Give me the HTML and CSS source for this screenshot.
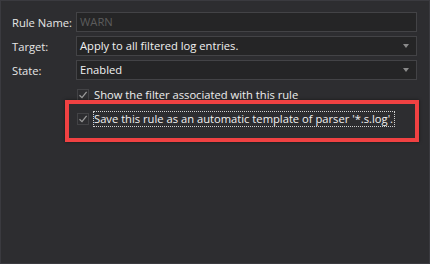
FILE: index.html
```html
<!DOCTYPE html>
<html lang="en">
<head>
    <meta charset="UTF-8">
    <title>Rule settings</title>
    <link rel="stylesheet" href="styles.css">
</head>
<body>

<div class="panel">
    <div class="form">
        <label class="label">Rule Name:</label>
        <div class="field"><span class="placeholder">WARN</span></div>

        <label class="label">Target:</label>
        <div class="field select"><span>Apply to all filtered log entries.</span><i class="arrow"></i></div>

        <label class="label">State:</label>
        <div class="field select"><span>Enabled</span><i class="arrow"></i></div>
    </div>

    <div class="options">
        <div class="option">
            <span class="check"><svg width="10" height="10" viewBox="0 0 10 10"><path d="M1.5 5.2 L4 7.6 L8.6 1.8" fill="none" stroke="#9a9a9a" stroke-width="1.3"/></svg></span>
            <span class="option-text">Show the filter associated with this rule</span>
        </div>
        <div class="option">
            <span class="check"><svg width="10" height="10" viewBox="0 0 10 10"><path d="M1.5 5.2 L4 7.6 L8.6 1.8" fill="none" stroke="#9a9a9a" stroke-width="1.3"/></svg></span>
            <span class="option-text focused">Save this rule as an automatic template of parser '*.s.log'.</span>
        </div>
        <div class="highlight"></div>
    </div>
</div>

</body>
</html>
```

FILE: styles.css
```css
body {
    margin: 0;
    background-color: #2d2d30;
    font-family: "Open Sans", "Noto Sans", sans-serif;
    font-size: 11.2px;
    color: #f1f1f1;
    white-space: nowrap;
}
.panel {
    width: 430px;
    height: 264px;
    box-sizing: border-box;
    border: 1px solid #3a3a3f;
    padding: 11px 12px 0 11px;
}
.form {
    display: grid;
    grid-template-columns: 64px 341px;
    row-gap: 4px;
    align-items: center;
}
.label {
    color: #e6e6e6;
}
.field {
    height: 20px;
    box-sizing: border-box;
    border: 1px solid #434346;
    background-color: #252526;
    padding: 0 3px;
    display: flex;
    align-items: center;
    justify-content: space-between;
    line-height: 18px;
}
.placeholder {
    color: #5c5c5c;
}
.arrow {
    width: 0;
    height: 0;
    border-left: 3px solid transparent;
    border-right: 3px solid transparent;
    border-top: 4px solid #8a8a8a;
    margin-right: 4px;
}
.options {
    position: relative;
    margin-top: 7px;
    padding-left: 65px;
    display: flex;
    flex-direction: column;
    gap: 8px;
}
.option {
    display: flex;
    align-items: center;
    gap: 4px;
    height: 16px;
}
.check {
    width: 12px;
    height: 12px;
    box-sizing: border-box;
    border: 1px solid #434346;
    display: flex;
    align-items: center;
    justify-content: center;
}
.option-text {
    line-height: 14px;
    padding: 0 1px 0 0;
    border: 1px solid transparent;
}
.option-text.focused {
    border: 1px dotted #d0d0d0;
}
.highlight {
    position: absolute;
    left: 53px;
    top: 13px;
    width: 354px;
    height: 42px;
    box-sizing: border-box;
    border: 4px solid #f04142;
    box-shadow: 0 0 3px rgba(0, 0, 0, 0.5);
}
```
